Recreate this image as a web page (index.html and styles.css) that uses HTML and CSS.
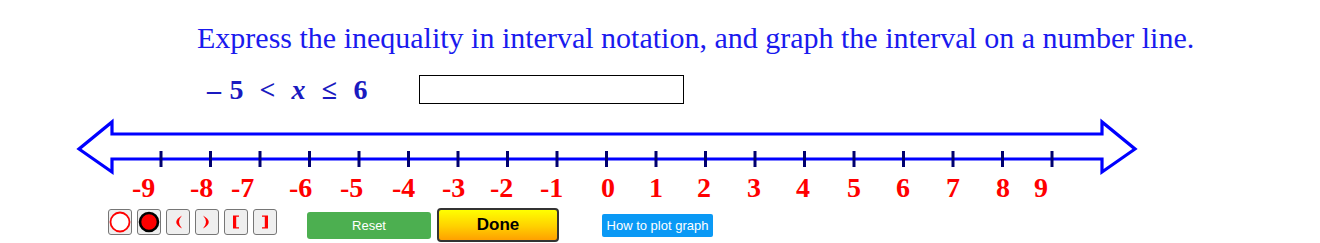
FILE: index.html
```html
<!DOCTYPE html>
<html>
<head>
<meta charset="utf-8">
<link rel="stylesheet" href="styles.css">
</head>
<body>
<p class="title">Express the inequality in interval notation, and graph the interval on a number line.</p>
<div class="ineq-row">
  <span class="g dash">–</span>
  <span class="g">5</span>
  <span class="g">&lt;</span>
  <span class="g it">x</span>
  <span class="g">≤</span>
  <span class="g">6</span>
  <input class="answer" type="text">
</div>
<svg class="numline" width="1320" height="95" viewBox="0 110 1320 95" xmlns="http://www.w3.org/2000/svg">
  <path d="M112,134 L112,122 L79,149 L112,172 L112,159 L1102,159 L1102,172 L1135,149 L1102,122 L1102,134 Z" fill="none" stroke="#0000ff" stroke-width="3.2" stroke-linejoin="miter"/>
  <g stroke="#000070" stroke-width="3">
    <line x1="161" y1="151" x2="161" y2="167"/>
    <line x1="210.5" y1="151" x2="210.5" y2="167"/>
    <line x1="260" y1="151" x2="260" y2="167"/>
    <line x1="309.5" y1="151" x2="309.5" y2="167"/>
    <line x1="359" y1="151" x2="359" y2="167"/>
    <line x1="408.5" y1="151" x2="408.5" y2="167"/>
    <line x1="458" y1="151" x2="458" y2="167"/>
    <line x1="507.5" y1="151" x2="507.5" y2="167"/>
    <line x1="557" y1="151" x2="557" y2="167"/>
    <line x1="606.5" y1="151" x2="606.5" y2="167"/>
    <line x1="656" y1="151" x2="656" y2="167"/>
    <line x1="705.5" y1="151" x2="705.5" y2="167"/>
    <line x1="755" y1="151" x2="755" y2="167"/>
    <line x1="804.5" y1="151" x2="804.5" y2="167"/>
    <line x1="854" y1="151" x2="854" y2="167"/>
    <line x1="903.5" y1="151" x2="903.5" y2="167"/>
    <line x1="953" y1="151" x2="953" y2="167"/>
    <line x1="1002.5" y1="151" x2="1002.5" y2="167"/>
    <line x1="1052" y1="151" x2="1052" y2="167"/>
  </g>
  <g class="lbl">
    <text x="132" y="197">-9</text>
    <text x="190" y="197">-8</text>
    <text x="231" y="197">-7</text>
    <text x="289" y="197">-6</text>
    <text x="340" y="197">-5</text>
    <text x="392" y="197">-4</text>
    <text x="442" y="197">-3</text>
    <text x="490" y="197">-2</text>
    <text x="540" y="197">-1</text>
    <text x="601" y="197">0</text>
    <text x="649" y="197">1</text>
    <text x="697" y="197">2</text>
    <text x="747" y="197">3</text>
    <text x="796" y="197">4</text>
    <text x="847" y="197">5</text>
    <text x="896" y="197">6</text>
    <text x="946" y="197">7</text>
    <text x="996" y="197">8</text>
    <text x="1034" y="197">9</text>
  </g>
</svg>
<div class="controls">
  <button class="tool"><svg width="22" height="22" viewBox="0 0 22 22"><circle cx="11" cy="11" r="9.5" fill="#fff" stroke="#ff0000" stroke-width="1.8"/></svg></button>
  <button class="tool"><svg width="22" height="22" viewBox="0 0 22 22"><circle cx="11" cy="11" r="9" fill="#ff0000" stroke="#000" stroke-width="2.6"/></svg></button>
  <button class="tool"><svg width="12" height="14" viewBox="0 0 12 14"><path d="M10,0.5 Q-1.5,7 10,13.5 Q4,7 10,0.5 Z" fill="#ff0000"/></svg></button>
  <button class="tool"><svg width="12" height="14" viewBox="0 0 12 14"><path d="M2,0.5 Q13.5,7 2,13.5 Q8,7 2,0.5 Z" fill="#ff0000"/></svg></button>
  <button class="tool"><svg width="10" height="14" viewBox="0 0 10 14"><path d="M2,0.5 H8 V1.8 H5.2 V12.2 H8 V13.5 H2 Z" fill="#ff0000"/></svg></button>
  <button class="tool"><svg width="10" height="14" viewBox="0 0 10 14"><path d="M8,0.5 H2 V1.8 H4.8 V12.2 H2 V13.5 H8 Z" fill="#ff0000"/></svg></button>
  <button class="reset">Reset</button>
  <button class="done">Done</button>
  <button class="how">How to plot graph</button>
</div>
</body>
</html>
```
FILE: styles.css
```css
html, body {
  margin: 0;
  padding: 0;
  background: #ffffff;
}
body {
  width: 1320px;
  height: 243px;
  overflow: hidden;
}
.title {
  margin: 0;
  padding: 21px 0 0 197px;
  font-family: "Liberation Serif", "Times New Roman", serif;
  font-size: 30px;
  line-height: 33px;
  color: #1a1aee;
  white-space: nowrap;
}
.ineq-row {
  display: flex;
  align-items: center;
  margin-top: 21px;
  padding-left: 199px;
  height: 29px;
  font-family: "Liberation Serif", "Times New Roman", serif;
  font-weight: bold;
  font-size: 28px;
  line-height: 29px;
  color: #1a1ac0;
}
.g {
  display: inline-block;
  width: 31px;
  text-align: center;
}
.g.dash {
  width: 22px;
  text-align: right;
}
.g.it {
  font-style: italic;
}
.answer {
  box-sizing: border-box;
  width: 265px;
  height: 29px;
  margin: 0 0 0 43px;
  padding: 0;
  border: 1px solid #000;
  background: #fff;
}
.numline {
  display: block;
  margin-top: 6px;
}
.lbl text {
  font-family: "Liberation Serif", "Times New Roman", serif;
  font-weight: bold;
  font-size: 28px;
  fill: #ff0000;
}
.controls {
  display: flex;
  align-items: center;
  height: 34px;
  margin-top: 3px;
  padding-left: 108px;
  font-family: "Liberation Sans", Arial, sans-serif;
}
.tool {
  box-sizing: border-box;
  width: 24px;
  height: 26px;
  margin: 0 5px 0 0;
  padding: 0;
  align-self: flex-start;
  margin-top: 1px;
  display: flex;
  align-items: center;
  justify-content: center;
  background: #efefef;
  border: 1px solid #767676;
  border-radius: 3px;
}
.tool svg {
  display: block;
}
.reset {
  box-sizing: border-box;
  width: 124px;
  height: 27px;
  margin-left: 25px;
  padding: 0;
  border: none;
  border-radius: 3px;
  background: #4caf50;
  color: #ffffff;
  font-family: "Liberation Sans", Arial, sans-serif;
  font-size: 13px;
}
.done {
  box-sizing: border-box;
  width: 122px;
  height: 34px;
  margin-left: 6px;
  padding: 0;
  border: 2px solid #333333;
  border-radius: 4px;
  background: linear-gradient(#ffff00 0%, #ffd000 55%, #ffa000 100%);
  color: #000000;
  font-family: "Liberation Sans", Arial, sans-serif;
  font-weight: bold;
  font-size: 17px;
}
.how {
  box-sizing: border-box;
  width: 111px;
  height: 23px;
  margin-left: 43px;
  padding: 0;
  border: none;
  border-radius: 2px;
  background: #0a99f5;
  color: #ffffff;
  font-family: "Liberation Sans", Arial, sans-serif;
  font-size: 13px;
  white-space: nowrap;
}
```
